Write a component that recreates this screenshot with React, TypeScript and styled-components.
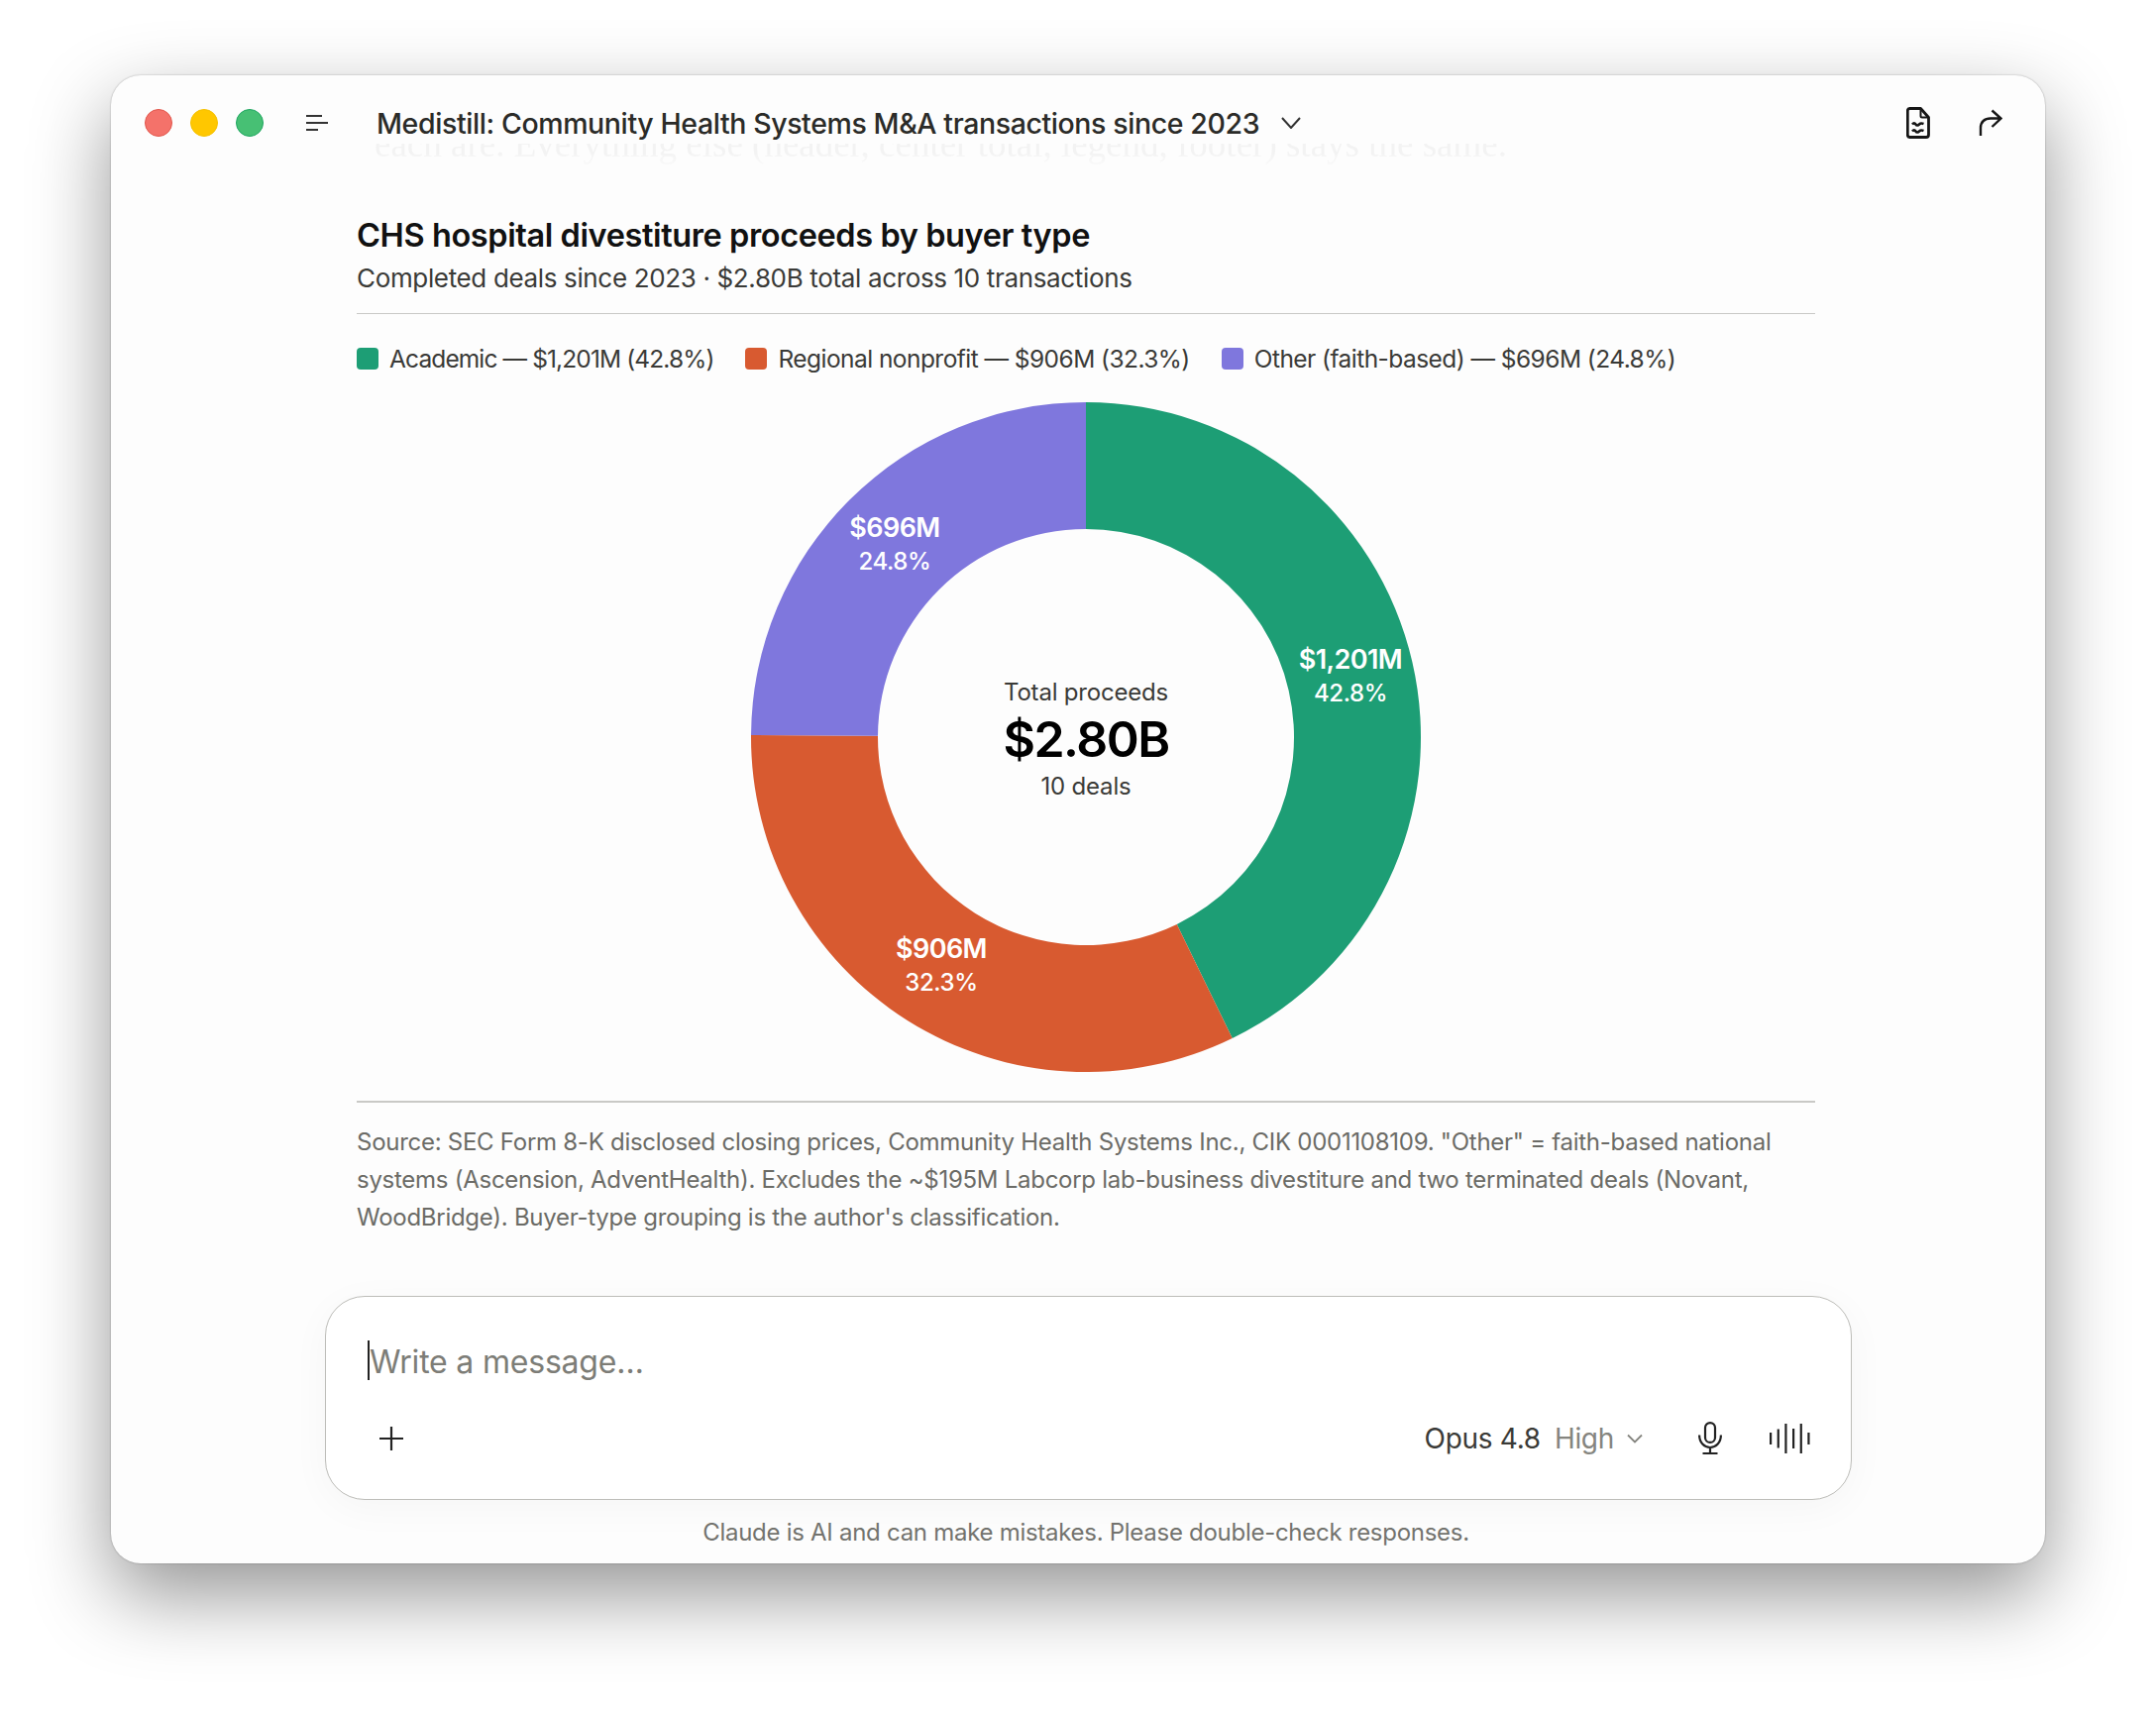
import * as React from 'react'
import styled, { createGlobalStyle } from 'styled-components'

const Global = createGlobalStyle`
  html, body {
    margin: 0;
    background: #fff;
  }
`

const font = `Inter, "Liberation Sans", sans-serif`

const Page = styled.div`
  width: 2176px;
  height: 1726px;
  padding: 76px 112px 148px;
  box-sizing: border-box;
  font-family: ${font};
`

const Window = styled.div`
  height: 100%;
  border-radius: 30px;
  background: #fdfdfd;
  box-shadow: 0 0 2px rgba(0, 0, 0, 0.3), 0 32px 80px rgba(0, 0, 0, 0.42);
  display: flex;
  flex-direction: column;
  overflow: hidden;
`

const Header = styled.div`
  height: 96px;
  flex: none;
  display: flex;
  align-items: center;
  padding: 0 43px 0 34px;
`

const Lights = styled.div`
  display: flex;
  gap: 18px;
  margin-right: 43px;
`

const Light = styled.span<{ $color: string; $edge: string }>`
  width: 28px;
  height: 28px;
  box-sizing: border-box;
  border-radius: 50%;
  background: ${p => p.$color};
  border: 1px solid ${p => p.$edge};
`

const Title = styled.div`
  margin-left: 49px;
  font-size: 28.5px;
  font-weight: 500;
  letter-spacing: -0.4px;
  color: #2b2b28;
`

const TitleChevron = styled.svg`
  margin-left: 22px;
  width: 20px;
  height: 12px;
`

const HeaderIcons = styled.div`
  margin-left: auto;
  display: flex;
  align-items: center;
  gap: 49px;
`

const Main = styled.div`
  flex: 1;
  padding: 0 232px 0 248px;
  position: relative;
`

const Ghost = styled.div`
  position: absolute;
  left: 266px;
  top: -27px;
  height: 22px;
  overflow: hidden;
  font-family: "Liberation Serif", serif;
  font-size: 37px;
  line-height: 2px;
  color: #f3f3f3;
  white-space: nowrap;
  mask-image: linear-gradient(to bottom, #000 40%, rgba(0, 0, 0, 0.35) 100%);
`

const ChartTitle = styled.h1`
  margin: 0;
  padding-top: 43px;
  font-size: 32.5px;
  line-height: 46px;
  font-weight: 600;
  letter-spacing: -0.4px;
  color: #111;
`

const ChartSub = styled.p`
  margin: 0 0 14.5px;
  font-size: 26px;
  line-height: 40px;
  letter-spacing: -0.35px;
  color: #3a3a37;
`

const Rule = styled.div`
  height: 1.5px;
  background: #c9c9c6;
`

const Legend = styled.div`
  display: flex;
  gap: 32px;
  padding: 23.5px 0 0;
  height: 42px;
  align-items: center;
  font-size: 24.5px;
  color: #3a3a37;
`

const LegendItem = styled.div<{ $tracking: number }>`
  display: flex;
  align-items: center;
  gap: 11px;
  letter-spacing: ${p => p.$tracking}px;
`

const Swatch = styled.span<{ $color: string }>`
  width: 22px;
  height: 22px;
  border-radius: 4px;
  background: ${p => p.$color};
`

const Chart = styled.svg`
  display: block;
  margin: 23.5px 0 15px 0;
  width: 1472px;
  height: 690px;
`

const Source = styled.p`
  margin: 0;
  padding-top: 21px;
  font-size: 24px;
  line-height: 38.4px;
  letter-spacing: -0.27px;
  color: #6b6b66;
`

const Composer = styled.div`
  margin: 0 195px 0 216px;
  height: 206px;
  flex: none;
  box-sizing: border-box;
  border: 1.5px solid #bdbdb9;
  border-radius: 40px;
  background: #fff;
  box-shadow: 0 8px 40px rgba(0, 0, 0, 0.035);
  padding: 44px 41px 0 42px;
`

const Placeholder = styled.div`
  height: 40px;
  font-size: 32px;
  line-height: 44px;
  color: #7d7d77;
  border-left: 2px solid #222;
  letter-spacing: -0.2px;
`

const ComposerRow = styled.div`
  display: flex;
  align-items: center;
  margin-top: 38.5px;
  height: 40px;
`

const PlusButton = styled.svg`
  margin-left: 11px;
  width: 26px;
  height: 26px;
`

const Model = styled.span`
  margin-left: auto;
  font-size: 28px;
  color: #3a3a37;
  letter-spacing: -0.3px;
`

const Effort = styled.span`
  margin-left: 14px;
  font-size: 28px;
  color: #85857f;
  letter-spacing: -0.3px;
`

const EffortChevron = styled.svg`
  margin: 0 56px 0 13px;
  width: 16px;
  height: 10px;
`

const Waves = styled.svg`
  margin-left: 48px;
  width: 41px;
  height: 32px;
`

const Disclaimer = styled.div`
  flex: none;
  height: 64px;
  padding-left: 16px;
  text-align: center;
  font-size: 24px;
  line-height: 66px;
  letter-spacing: -0.28px;
  color: #73736e;
`

const slices = [
  { color: '#1D9E75', from: 0, to: 0.428 },
  { color: '#D85A30', from: 0.428, to: 0.751 },
  { color: '#7F77DD', from: 0.751, to: 1 },
]

const cx = 736
const cy = 338
const R = 338
const r = 210

function arc(from: number, to: number) {
  const pt = (t: number, rad: number) => {
    const a = t * Math.PI * 2
    return `${(cx + Math.sin(a) * rad).toFixed(2)} ${(cy - Math.cos(a) * rad).toFixed(2)}`
  }
  const large = to - from > 0.5 ? 1 : 0
  return `M${pt(from, R)}A${R} ${R} 0 ${large} 1 ${pt(to, R)}L${pt(to, r)}A${r} ${r} 0 ${large} 0 ${pt(from, r)}Z`
}

const labels = [
  { x: 1003, amount: '$1,201M', pct: '42.8%', y: 268.5 },
  { x: 543, amount: '$696M', pct: '24.8%', y: 135.5 },
  { x: 590, amount: '$906M', pct: '32.3%', y: 560.5 },
]

export default function App() {
  return (
    <Page>
      <Global />
      <Window>
        <Header>
          <Lights>
            <Light $color="#F4726A" $edge="#E2574C" />
            <Light $color="#FFC700" $edge="#F6C100" />
            <Light $color="#47C074" $edge="#1FA661" />
          </Lights>
          <svg width="22" height="16" viewBox="0 0 22 16" fill="none" stroke="#333" strokeWidth="2">
            <path d="M0 1h16M0 8h22M0 15h12" />
          </svg>
          <Title>Medistill: Community Health Systems M&amp;A transactions since 2023</Title>
          <TitleChevron viewBox="0 0 20 12" fill="none" stroke="#333" strokeWidth="2">
            <path d="M1 1l9 10 9-10" />
          </TitleChevron>
          <HeaderIcons>
            <svg width="24" height="32" viewBox="0 0 24 32" fill="none" stroke="#161616" strokeWidth="2.8" strokeLinejoin="round">
              <path d="M3.500 1.500h11l8 9v17.500a2.500 2.500 0 0 1-2.500 2.500H3.500A2.500 2.500 0 0 1 1.300 28V3.800A2.300 2.300 0 0 1 3.500 1.500z" />
              <path d="M14.500 1.500V9a1.500 1.500 0 0 0 1.500 1.500h6.500" strokeWidth="2" />
              <path d="M6 17.500c1.300-1.500 2.500-1.500 3.500 0s2.500 1 3.500 0 2.300-1.300 4.500-.5M6 24.500c1.300-1.500 2.500-1.500 3.500 0s2.500 1 3.500 0 2.300-1.300 4.500-.5" strokeWidth="2.600" />
            </svg>
            <svg width="24" height="28" viewBox="0 0 24 28" fill="none" stroke="#161616" strokeWidth="2.400">
              <path d="M2 27V19C2 13 6 9.500 12 9.500H22M13.500 1.500L22.500 9.500L13.500 18" />
            </svg>
          </HeaderIcons>
        </Header>
        <Main>
          <Ghost>each are. Everything else (header, center total, legend, footer) stays the same.</Ghost>
          <ChartTitle>CHS hospital divestiture proceeds by buyer type</ChartTitle>
          <ChartSub>Completed deals since 2023 · $2.80B total across 10 transactions</ChartSub>
          <Rule />
          <Legend>
            <LegendItem $tracking={-0.88}><Swatch $color="#1D9E75" />Academic — $1,201M (42.8%)</LegendItem>
            <LegendItem $tracking={-0.55}><Swatch $color="#D85A30" />Regional nonprofit — $906M (32.3%)</LegendItem>
            <LegendItem $tracking={-0.55}><Swatch $color="#7F77DD" />Other (faith-based) — $696M (24.8%)</LegendItem>
          </Legend>
          <Chart viewBox="0 0 1472 690">
            {slices.map(s => <path key={s.color} d={arc(s.from, s.to)} fill={s.color} />)}
            {labels.map(l => (
              <g key={l.amount} textAnchor="middle" fill="#fff" fontFamily={font}>
                <text x={l.x} y={l.y} fontSize="27" fontWeight="600" letterSpacing="-0.6">{l.amount}</text>
                <text x={l.x} y={l.y + 33} fontSize="24" fontWeight="500" letterSpacing="-0.4">{l.pct}</text>
              </g>
            ))}
            <g textAnchor="middle" fontFamily={font}>
              <text x={cx} y={300.5} fontSize="24" fill="#3a3a37" letterSpacing="-0.2">Total proceeds</text>
              <text x={cx} y={357.5} fontSize="50" fontWeight="600" fill="#000" letterSpacing="-1.5">$2.80B</text>
              <text x={cx} y={395.5} fontSize="24" fill="#3a3a37" letterSpacing="-0.2">10 deals</text>
            </g>
          </Chart>
          <Rule />
          <Source>
            Source: SEC Form 8-K disclosed closing prices, Community Health Systems Inc., CIK 0001108109. "Other" = faith-based national systems (Ascension, AdventHealth). Excludes the ~$195M Labcorp lab-business divestiture and two terminated deals (Novant, WoodBridge). Buyer-type grouping is the author's classification.
          </Source>
        </Main>
        <Composer>
          <Placeholder>Write a message…</Placeholder>
          <ComposerRow>
            <PlusButton viewBox="0 0 26 26" stroke="#222" strokeWidth="2.200">
              <path d="M13 1v24M1 13h24" />
            </PlusButton>
            <Model>Opus 4.8</Model>
            <Effort>High</Effort>
            <EffortChevron viewBox="0 0 16 10" fill="none" stroke="#85857f" strokeWidth="1.800">
              <path d="M1 1.500l7 7 7-7" />
            </EffortChevron>
            <svg width="24" height="33" viewBox="0 0 24 33" fill="none" stroke="#222" strokeWidth="2.200">
              <rect x="7" y="1.100" width="10" height="19.800" rx="5" />
              <path d="M1.100 13.500C1.100 21 6 26 12 26s10.900-5 10.900-12.500M12 26v6M4.500 32h15" />
            </svg>
            <Waves viewBox="0 0 41 32" stroke="#222" strokeWidth="2.200">
              <path d="M1.100 10v12M8.770 6.500v19M16.430 1v30M24.100 6v20M31.770 1v30M39.430 10v12" />
            </Waves>
          </ComposerRow>
        </Composer>
        <Disclaimer>Claude is AI and can make mistakes. Please double-check responses.</Disclaimer>
      </Window>
    </Page>
  )
}
